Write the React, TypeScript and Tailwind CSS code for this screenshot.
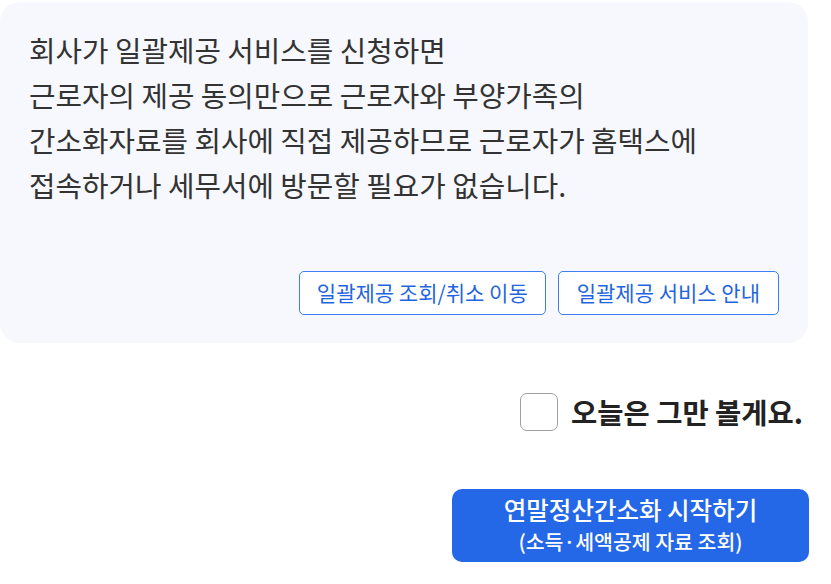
export default function App() {
  const font = { fontFamily: '"Noto Sans CJK KR", "Noto Sans", sans-serif' };

  return (
    <div className="w-[831px] h-[584px] bg-white text-[#333]" style={font}>
      <div className="w-[808px] pt-[2px] flex flex-col">
        {/* info card */}
        <div className="bg-[#f6f8fd] rounded-[20px] h-[341px] px-[29px] pt-[25px] pb-[28px] flex flex-col justify-between">
          <p className="text-[28.8px] leading-[45px] text-[#333]">
            회사가 일괄제공 서비스를 신청하면
            <br />
            근로자의 제공 동의만으로 근로자와 부양가족의
            <br />
            간소화자료를 회사에 직접 제공하므로 근로자가 홈택스에
            <br />
            접속하거나 세무서에 방문할 필요가 없습니다.
          </p>
          <div className="flex justify-end gap-[12px]">
            <button className="h-[44px] px-[17px] rounded-[5px] border border-[#3d7ff2] bg-white text-[#1f65e0] text-[21px]">
              일괄제공 조회/취소 이동
            </button>
            <button className="h-[44px] px-[18px] rounded-[5px] border border-[#3d7ff2] bg-white text-[#1f65e0] text-[21px]">
              일괄제공 서비스 안내
            </button>
          </div>
        </div>

        {/* don't show again */}
        <label className="flex items-center justify-end gap-[13px] mt-[48px] pr-[5px]">
          <span className="w-[38px] h-[38px] rounded-[7px] border border-[#a0a0a0] bg-white" />
          <span className="text-[28.5px] font-bold text-[#222]">오늘은 그만 볼게요.</span>
        </label>

        {/* start button */}
        <div className="flex justify-end mt-[55px]">
          <button className="w-[357px] h-[73px] -mr-[1px] rounded-[10px] bg-[#2468e8] text-white flex flex-col items-center justify-center">
            <span className="block text-[24.5px] font-medium leading-[32px]">연말정산간소화 시작하기</span>
            <span className="block text-[20.5px] font-medium leading-[30px]">(소득·세액공제 자료 조회)</span>
          </button>
        </div>
      </div>
    </div>
  );
}
